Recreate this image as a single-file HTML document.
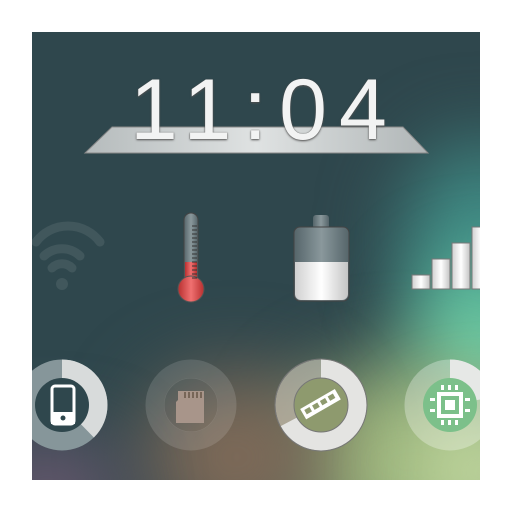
<!DOCTYPE html>
<html><head><meta charset="utf-8"><style>
html,body{margin:0;padding:0;background:#fff;width:512px;height:512px;overflow:hidden}
#c{position:absolute;left:32px;top:32px;width:448px;height:448px;overflow:hidden;background:#2f474d}
.bg{position:absolute;border-radius:50%;filter:blur(40px)}
.clock{position:absolute;left:98px;top:35px;height:90px;line-height:86px;white-space:nowrap;font-family:"Liberation Sans",sans-serif;font-size:86px;letter-spacing:12px;color:#f2f3f3;text-shadow:0 0 1px #444,0 1px 2px #555;z-index:3}
svg{position:absolute;left:0;top:0}
</style></head><body>
<div id="c">
 <div class="bg" style="left:370px;top:110px;width:160px;height:200px;background:#3f8a84"></div>
 <div class="bg" style="left:380px;top:230px;width:140px;height:170px;background:#6ad0a8"></div>
 <div class="bg" style="left:250px;top:330px;width:260px;height:200px;background:#9bb57c"></div>
 <div class="bg" style="left:110px;top:340px;width:190px;height:170px;background:#7e6a58"></div>
 <div class="bg" style="left:-60px;top:410px;width:150px;height:100px;background:#6e5a72"></div>
 <div class="bg" style="left:380px;top:380px;width:140px;height:120px;background:#c2d8a0"></div>
 <svg width="448" height="448" viewBox="32 32 448 448" style="z-index:2">
  <defs>
   <linearGradient id="sh" x1="0" y1="0" x2="1" y2="0">
    <stop offset="0" stop-color="#b5bbbc"/><stop offset=".5" stop-color="#dfe2e2"/><stop offset="1" stop-color="#b0b6b7"/>
   </linearGradient>
   <linearGradient id="met" x1="0" y1="0" x2="1" y2="0">
    <stop offset="0" stop-color="#d0d0d0"/><stop offset=".5" stop-color="#ffffff"/><stop offset="1" stop-color="#c4c4c4"/>
   </linearGradient>
   <linearGradient id="dk" x1="0" y1="0" x2="1" y2="0">
    <stop offset="0" stop-color="#55656a"/><stop offset=".5" stop-color="#8a989c"/><stop offset="1" stop-color="#55656a"/>
   </linearGradient>
   <linearGradient id="rd" x1="0" y1="0" x2="1" y2="0">
    <stop offset="0" stop-color="#b83030"/><stop offset=".5" stop-color="#f07070"/><stop offset="1" stop-color="#b83030"/>
   </linearGradient>
  </defs>
  <path d="M112 127 L403 127 L428 153 L85 153 Z" fill="url(#sh)" stroke="#888" stroke-width="1"/>
  <g fill="none" stroke="#41575c" stroke-width="9" stroke-linecap="round">
   <path d="M36 242 A40 40 0 0 1 100 242"/>
   <path d="M44 256 A26 26 0 0 1 80 256"/>
   <path d="M52 268 A14 14 0 0 1 72 268"/>
  </g>
  <circle cx="62" cy="284" r="6" fill="#41575c"/>
  <rect x="184" y="213" width="14" height="80" rx="7" fill="url(#dk)" stroke="#444" stroke-width="1"/>
  <rect x="185" y="262" width="12" height="24" fill="url(#rd)"/>
  <circle cx="191" cy="289" r="13" fill="url(#rd)" stroke="#555" stroke-width="1"/>
  <g stroke="#333" stroke-width="1">
   <path d="M192 226h5M192 230h5M192 234h5M192 238h5M192 242h5M192 246h5M192 250h5M192 254h5M192 258h5M192 262h5M192 266h5M192 270h5M192 274h5M192 278h5"/>
  </g>
  <rect x="313" y="215" width="16" height="14" rx="3" fill="url(#dk)"/>
  <rect x="294" y="227" width="55" height="74" rx="6" fill="url(#dk)" stroke="#444" stroke-width="1"/>
  <path d="M295 262 H348 V294 a6 6 0 0 1 -6 6 H301 a6 6 0 0 1 -6 -6 Z" fill="url(#met)"/>
  <g fill="url(#met)" stroke="#777" stroke-width="1">
   <rect x="412" y="275" width="18" height="14"/>
   <rect x="432" y="259" width="18" height="30"/>
   <rect x="452" y="243" width="18" height="46"/>
   <rect x="472" y="227" width="18" height="62"/>
  </g>
  <circle cx="62" cy="405" r="36" fill="none" stroke="#86969a" stroke-width="19"/>
  <circle cx="62" cy="405" r="36" fill="none" stroke="#d8dbdb" stroke-width="19" stroke-dasharray="85 300" transform="rotate(-90 62 405)"/>
  <circle cx="62" cy="405" r="27" fill="#2f474d"/>
  <rect x="52" y="386" width="22" height="38" rx="3" fill="none" stroke="#fff" stroke-width="3"/>
  <rect x="51" y="412" width="24" height="12" fill="#fff"/>
  <circle cx="63" cy="418" r="2.5" fill="#2f474d"/>
  <circle cx="191" cy="405" r="36" fill="none" stroke="rgba(255,255,255,0.13)" stroke-width="19"/>
  <circle cx="191" cy="405" r="27" fill="rgba(255,255,255,0.07)"/>
  <path d="M178 391 H204 V423 H176 V402 L178 400 Z" fill="#a8958a"/>
  <g fill="#776658"><rect x="184" y="392" width="2" height="6"/><rect x="188" y="392" width="2" height="6"/><rect x="192" y="392" width="2" height="6"/><rect x="196" y="392" width="2" height="6"/><rect x="200" y="392" width="2" height="6"/></g>
  <circle cx="321" cy="405" r="36" fill="none" stroke="rgba(220,215,200,0.55)" stroke-width="19"/>
  <circle cx="321" cy="405" r="36" fill="none" stroke="#e4e4e2" stroke-width="19" stroke-dasharray="152 300" transform="rotate(-90 321 405)"/>
  <circle cx="321" cy="405" r="46" fill="none" stroke="#777" stroke-width="1"/>
  <circle cx="321" cy="405" r="27" fill="#8e9a6e" stroke="#777" stroke-width="1"/>
  <g transform="rotate(-30 321 405)">
   <rect x="301" y="398" width="40" height="12" fill="#fff"/>
   <g fill="#8e9a6e"><rect x="304" y="401" width="6" height="5"/><rect x="313" y="401" width="6" height="5"/><rect x="322" y="401" width="6" height="5"/><rect x="331" y="401" width="6" height="5"/></g>
  </g>
  <circle cx="450" cy="405" r="36" fill="none" stroke="rgba(255,255,255,0.3)" stroke-width="19"/>
  <circle cx="450" cy="405" r="36" fill="none" stroke="#e6e8e6" stroke-width="19" stroke-dasharray="50 300" transform="rotate(-90 450 405)"/>
  <circle cx="450" cy="405" r="27" fill="#7cc08a"/>
  <rect x="437" y="392" width="26" height="26" fill="#fff"/>
  <rect x="441" y="396" width="18" height="18" fill="#7cc08a"/>
  <rect x="445" y="400" width="10" height="10" fill="#fff"/>
  <g fill="#fff">
   <rect x="441" y="385" width="3" height="5"/><rect x="448" y="385" width="3" height="5"/><rect x="455" y="385" width="3" height="5"/>
   <rect x="441" y="420" width="3" height="5"/><rect x="448" y="420" width="3" height="5"/><rect x="455" y="420" width="3" height="5"/>
   <rect x="430" y="398" width="5" height="3"/><rect x="430" y="409" width="5" height="3"/>
   <rect x="465" y="398" width="5" height="3"/><rect x="465" y="409" width="5" height="3"/>
  </g>
 </svg>
 <div class="clock">11:04</div>
</div>
</body></html>
